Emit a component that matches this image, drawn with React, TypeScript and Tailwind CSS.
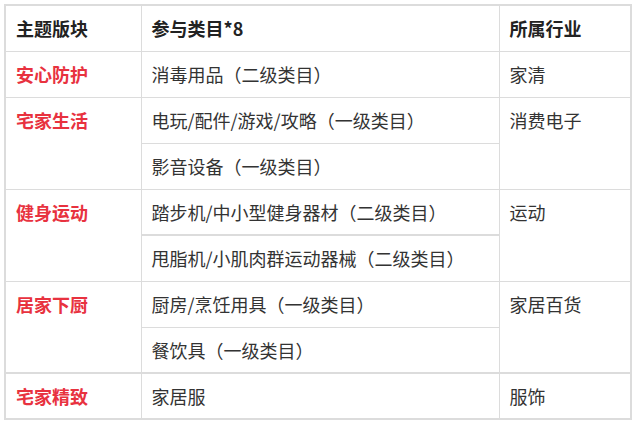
const rows: { theme: string; cats: string[]; industry: string; thick?: boolean }[] = [
  { theme: "安心防护", cats: ["消毒用品（二级类目）"], industry: "家清" },
  {
    theme: "宅家生活",
    cats: ["电玩/配件/游戏/攻略（一级类目）", "影音设备（一级类目）"],
    industry: "消费电子",
  },
  {
    theme: "健身运动",
    cats: ["踏步机/中小型健身器材（二级类目）", "甩脂机/小肌肉群运动器械（二级类目）"],
    industry: "运动",
  },
  {
    theme: "居家下厨",
    cats: ["厨房/烹饪用具（一级类目）", "餐饮具（一级类目）"],
    industry: "家居百货",
  },
  { theme: "宅家精致", cats: ["家居服"], industry: "服饰", thick: true },
];

const cell = "border border-[#dcdcdc] pl-[10px] pr-2 h-[46px] align-top pt-[10px] leading-[25px]";

export default function App() {
  return (
    <div className="w-[636px] h-[429px] bg-white pt-1 pl-1 font-['Noto_Sans_CJK_SC',sans-serif] text-[18px] text-[#333]">
      <table className="border-collapse border-2 border-[#dcdcdc] w-[628px] table-fixed">
        <colgroup>
          <col className="w-[136px]" />
          <col className="w-[358px]" />
          <col />
        </colgroup>
        <thead>
          <tr>
            <th className={`${cell} text-left font-bold text-[#222]`}>主题版块</th>
            <th className={`${cell} text-left font-bold text-[#222]`}>参与类目*8</th>
            <th className={`${cell} text-left font-bold text-[#222]`}>所属行业</th>
          </tr>
        </thead>
        <tbody>
          {rows.map((r) =>
            r.cats.map((c, i) => {
              const top = r.thick ? "border-t-2" : "";
              return (
                <tr key={r.theme + i}>
                  {i === 0 && (
                    <td rowSpan={r.cats.length} className={`${cell} ${top} font-bold text-[#e8323f]`}>
                      {r.theme}
                    </td>
                  )}
                  <td className={`${cell} ${top} ${r.theme === "健身运动" && i === 1 ? "border-t-2" : ""}`}>
                    {c}
                  </td>
                  {i === 0 && (
                    <td rowSpan={r.cats.length} className={`${cell} ${top}`}>
                      {r.industry}
                    </td>
                  )}
                </tr>
              );
            })
          )}
        </tbody>
      </table>
    </div>
  );
}
